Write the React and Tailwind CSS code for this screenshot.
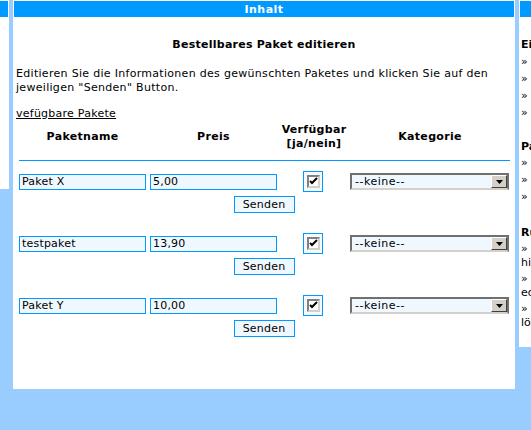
export default function App() {
  const rows = [
    { name: "Paket X", price: "5,00" },
    { name: "testpaket", price: "13,90" },
    { name: "Paket Y", price: "10,00" },
  ];
  const font = "font-['DejaVu_Sans',Verdana,sans-serif]";
  return (
    <div className={`w-[531px] h-[430px] overflow-hidden bg-[#99ccff] flex items-start gap-[4px] text-[11px] leading-[14px] text-black ${font}`}>
      {/* left column */}
      <div className="w-[9px] h-[189px] bg-white pt-px pr-px shrink-0">
        <div className="h-4 bg-[#0099ff]" />
      </div>

      {/* main column */}
      <div className="w-[502px] h-[389px] bg-white p-px shrink-0">
        <div className="h-4 bg-[#0099ff] text-white font-bold text-center leading-4 pt-px tracking-[0.5px]">Inhalt</div>
        <div className="px-[2px]">
          <div className="mt-[21px] text-center font-bold tracking-[0.25px]">Bestellbares Paket editieren</div>
          <p className="mt-[15px] tracking-[0.3px]">
            Editieren Sie die Informationen des gewünschten Paketes und klicken Sie auf den jeweiligen "Senden" Button.
          </p>
          <div className="mt-[12px] tracking-[0.25px]">
            <span className="underline">vefügbare Pakete</span>
          </div>
          <div className="mt-[2px] flex items-center h-[28px] font-bold text-center tracking-[0.3px]">
            <div className="w-[133px]">Paketname</div>
            <div className="w-[129px]">Preis</div>
            <div className="w-[72px]">Verfügbar<br />[ja/nein]</div>
            <div className="w-[160px]">Kategorie</div>
          </div>
          <div className="mt-[9px] ml-[3px] w-[491px] h-px bg-[#0099ff]" />
          {rows.map((r, i) => (
            <div key={i} className={i === 0 ? "mt-[10px]" : "mt-[20px]"}>
              <div className="flex items-center h-[21px]">
                <div className="ml-[3px] w-[127px] h-[16px] border border-[#0099ff] bg-[#f0f8ff] px-[2px] leading-[14px] tracking-[0.2px]">{r.name}</div>
                <div className="ml-[4px] w-[127px] h-[16px] border border-[#0099ff] bg-[#f0f8ff] px-[2px] leading-[14px] tracking-[0.2px]">{r.price}</div>
                <div className="ml-[26px] w-[20px] h-[21px] border border-[#0099ff] bg-[#f4f9fc] flex items-center justify-center">
                  <div className="w-[13px] h-[13px] border-2 border-t-[#808080] border-l-[#808080] border-b-[#d4d0c8] border-r-[#d4d0c8] bg-white flex items-center justify-center">
                    <svg width="9" height="9" viewBox="0 0 9 9">
                      <path d="M1 4 L3 6 L8 1" stroke="#000" strokeWidth="2" fill="none" />
                    </svg>
                  </div>
                </div>
                <div className="ml-[27px] w-[159px] h-[17px] border-2 border-t-[#707070] border-l-[#707070] border-r-[#707070] border-b-[#d4d0c8] bg-[#f0f8ff] flex items-center">
                  <span className="flex-1 pl-[3px] leading-[13px] tracking-[0.5px]">--keine--</span>
                  <div className="w-[16px] h-[13px] bg-[#d4d0c8] border border-t-white border-l-white border-b-[#404040] border-r-[#404040] flex items-center justify-center">
                    <svg width="7" height="4" viewBox="0 0 7 4">
                      <path d="M0 0 H7 L3.5 4 Z" fill="#000" />
                    </svg>
                  </div>
                </div>
              </div>
              <div className="mt-[4px] flex justify-center">
                <div className="w-[61px] h-[17px] border border-[#0099ff] bg-[#f0f8ff] text-center leading-[15px] tracking-[0.2px]">Senden</div>
              </div>
            </div>
          ))}
        </div>
      </div>

      {/* right column */}
      <div className="w-[200px] h-[347px] bg-white p-px shrink-0">
        <div className="h-4 bg-[#0099ff]" />
        <div className="pl-px">
          <div className="mt-[21px] font-bold">Einstellungen</div>
          <div className="mt-[3px]">» Profil</div>
          <div className="mt-[3px]">» Passwort</div>
          <div className="mt-[3px]">» Adressen</div>
          <div className="mt-[3px]">» Abmelden</div>
          <div className="mt-[20px] font-bold">Pakete</div>
          <div className="mt-[2px]">» Paket hinzufügen</div>
          <div className="mt-[3px]">» Paket editieren</div>
          <div className="mt-[3px]">» Paket löschen</div>
          <div className="mt-[22px] font-bold">Rubriken</div>
          <div className="mt-[2px]">» Kategorie<br />hinzufügen</div>
          <div className="mt-[2px]">» Kategorie<br />editieren</div>
          <div className="mt-[2px]">» Kategorie<br />löschen</div>
        </div>
      </div>
    </div>
  );
}
